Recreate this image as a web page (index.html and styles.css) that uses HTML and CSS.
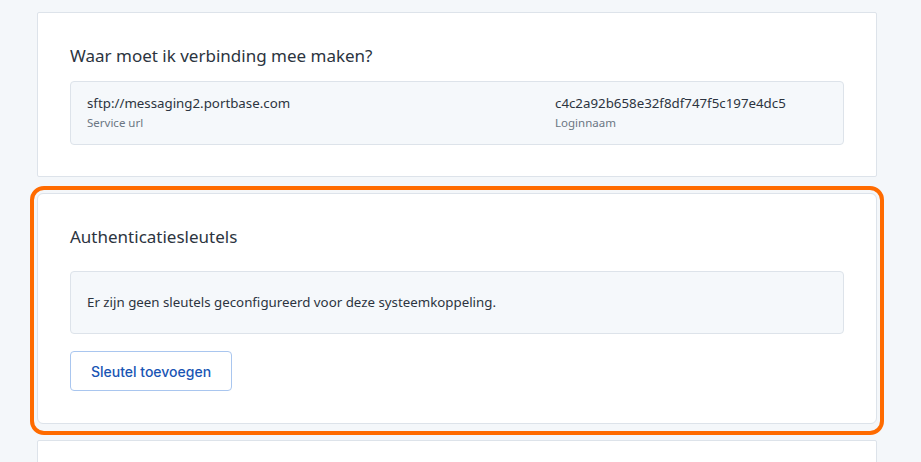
FILE: index.html
```html
<!DOCTYPE html>
<html lang="nl">
<head>
<meta charset="utf-8">
<title>Systeemkoppeling</title>
<link rel="stylesheet" href="styles.css">
</head>
<body>
<main class="page">
  <section class="card">
    <h2 class="card-title">Waar moet ik verbinding mee maken?</h2>
    <div class="info-box info-grid">
      <div class="field">
        <div class="field-value">sftp://messaging2.portbase.com</div>
        <div class="field-label">Service url</div>
      </div>
      <div class="field">
        <div class="field-value">c4c2a92b658e32f8df747f5c197e4dc5</div>
        <div class="field-label">Loginnaam</div>
      </div>
    </div>
  </section>
  <section class="card card-highlight">
    <h2 class="card-title card-title-wide">Authenticatiesleutels</h2>
    <div class="info-box info-message">Er zijn geen sleutels geconfigureerd voor deze systeemkoppeling.</div>
    <button class="btn-outline" type="button">Sleutel toevoegen</button>
  </section>
  <section class="card card-empty"></section>
</main>
</body>
</html>
```
FILE: styles.css
```css
html, body {
  margin: 0;
  padding: 0;
  background: #f4f7fa;
  font-family: "Noto Sans", "Open Sans", sans-serif;
  color: #2c3440;
}
.page {
  width: 840px;
  margin: 0 0 0 37px;
  padding-top: 12px;
  display: flex;
  flex-direction: column;
  gap: 16px;
}
.card {
  background: #ffffff;
  border: 1px solid #dde3ea;
  border-radius: 2px;
  padding: 33px 32px 31px 32px;
}
.card-highlight {
  position: relative;
  border-radius: 6px;
  padding-bottom: 32px;
}
.card-highlight::after {
  content: "";
  position: absolute;
  top: -8px;
  left: -8px;
  right: -8px;
  bottom: -12px;
  border: 4px solid #ff6b00;
  border-radius: 14px;
  pointer-events: none;
}
.card-empty {
  height: 60px;
  padding: 0;
}
.card-title {
  margin: 0 0 15px 0;
  font-size: 17px;
  font-weight: 400;
  line-height: 20px;
  color: #2c3440;
}
.card-title-wide {
  margin-bottom: 24px;
}
.info-box {
  background: #f5f8fb;
  border: 1px solid #dde3ea;
  border-radius: 4px;
}
.info-grid {
  display: grid;
  grid-template-columns: 468px 1fr;
  padding: 12px 16px 13px 16px;
}
.field-value {
  font-size: 13.3px;
  line-height: 18px;
  color: #2c3440;
}
.field-label {
  margin-top: 3px;
  font-size: 11.5px;
  line-height: 16px;
  color: #6b7683;
}
.info-message {
  padding: 21px 16px 22px 16px;
  font-size: 13.3px;
  line-height: 18px;
  color: #2c3440;
}
.btn-outline {
  margin-top: 17px;
  display: block;
  width: 162px;
  height: 40px;
  background: #ffffff;
  border: 1px solid #a9c6ef;
  border-radius: 4px;
  color: #1955b4;
  font-family: Inter, Roboto, sans-serif;
  font-size: 14px;
  font-weight: 500;
  cursor: pointer;
}
```
